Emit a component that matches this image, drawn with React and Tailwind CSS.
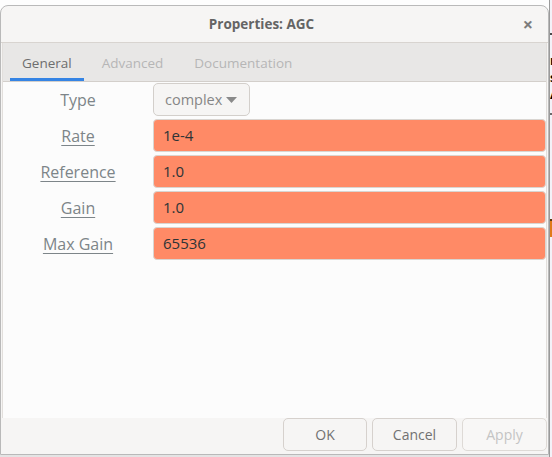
import React from "react";

const font = { fontFamily: '"Open Sans", "Noto Sans", sans-serif' };

function Field({ value }) {
  return (
    <div className="flex-1 h-[33px] rounded-[4px] border border-[#d9d5d1] bg-[#ff8a66] flex items-center pl-[9px] text-[15px] text-[#2e3436]">
      {value}
    </div>
  );
}

function Label({ children, underline = true }) {
  return (
    <div className="w-[150px] flex items-center justify-center text-[16px] text-[#7d8589]">
      <span className={underline ? "underline underline-offset-[3px] decoration-1" : ""}>{children}</span>
    </div>
  );
}

export default function App() {
  const rows = [
    ["Rate", "1e-4"],
    ["Reference", "1.0"],
    ["Gain", "1.0"],
    ["Max Gain", "65536"],
  ];
  return (
    <div className="w-[552px] h-[457px] bg-[#fdfdfd] flex overflow-hidden" style={font}>
      <div className="w-[549px] flex flex-col">
        <div className="h-[5px]" />
        <div className="h-[450px] w-[549px] flex flex-col border border-[#b9b9b9] rounded-t-[8px] bg-[#f6f5f4] overflow-hidden">
          {/* title bar */}
          <div className="h-[37px] border-b border-[#d8d4d0] flex items-center relative">
            <div className="flex-1 text-center pr-[26px] pt-[1px] text-[13.5px] font-bold text-[#646464]">
              Properties: AGC
            </div>
            <div className="absolute right-[15px] top-[9px] text-[18px] leading-[18px] font-bold text-[#7c7c7c]">×</div>
          </div>
          {/* notebook */}
          <div className="flex-1 flex flex-col mx-[1px] border-l border-r border-[#e2dfdc]">
            <div className="h-[39px] bg-[#e8e7e6] border-b border-[#d3cfcb] flex items-end pl-[7px]">
              <div className="h-[38px] px-[12px] flex items-center border-b-[3px] border-[#3584e4] text-[13.5px] text-[#6e6e6e] pt-[6px]">
                General
              </div>
              <div className="h-[38px] px-[18px] flex items-center text-[13.5px] text-[#b6b6b6] pt-[6px] border-b-[3px] border-transparent">
                Advanced
              </div>
              <div className="h-[38px] px-[13px] flex items-center text-[13.5px] text-[#b6b6b6] pt-[6px] border-b-[3px] border-transparent">
                Documentation
              </div>
            </div>
            <div className="flex-1 bg-[#fcfcfc] pt-[1px] flex flex-col gap-[3px]">
              <div className="flex h-[33px]">
                <Label underline={false}>Type</Label>
                <div className="h-[33px] w-[97px] rounded-[5px] border border-[#d3cfcb] bg-[#f6f5f4] flex items-center pl-[11px] gap-[4px] text-[14.5px] text-[#868686]">
                  complex
                  <svg width="11" height="6" viewBox="0 0 11 6"><path d="M0 0 L11 0 L5.5 6 Z" fill="#8a8a8a" /></svg>
                </div>
              </div>
              {rows.map(([l, v]) => (
                <div key={l} className="flex h-[33px]">
                  <Label>{l}</Label>
                  <Field value={v} />
                </div>
              ))}
            </div>
          </div>
          {/* footer */}
          <div className="h-[36px] flex justify-end gap-[5px] pr-[1px] pb-[3px]">
            <button className="w-[84px] h-[33px] rounded-[5px] border border-[#d6d1cd] bg-[#f6f5f4] text-[14px] text-[#717171]">OK</button>
            <button className="w-[85px] h-[33px] rounded-[5px] border border-[#d6d1cd] bg-[#f6f5f4] text-[14px] text-[#717171]">Cancel</button>
            <button className="w-[85px] h-[33px] rounded-[5px] border border-[#dedad6] bg-[#f8f7f6] text-[14px] text-[#c4c4c4]">Apply</button>
          </div>
        </div>
        <div className="flex-1 bg-[#e4e4e4]" />
      </div>
      {/* background app strip */}
      <div className="w-[3px] h-[457px] bg-[#f3f2f8] flex flex-col overflow-hidden border-l border-[#9a9a9a]">
        <div className="h-[33px]" />
        <div className="h-[2px] bg-[#4a4a4a]" />
        <div className="h-[17px]" />
        <div className="text-[13px] leading-[17px] font-bold text-black">r</div>
        <div className="text-[13px] leading-[17px] font-bold text-black">s</div>
        <div className="text-[13px] leading-[17px] font-bold text-black">A</div>
        <div className="h-[10px]" />
        <div className="h-[2px] bg-[#6a6a6a]" />
        <div className="h-[104px]" />
        <div className="h-[18px] bg-[#e07a1a] border-t-2 border-[#5a3a10]" />
      </div>
    </div>
  );
}
